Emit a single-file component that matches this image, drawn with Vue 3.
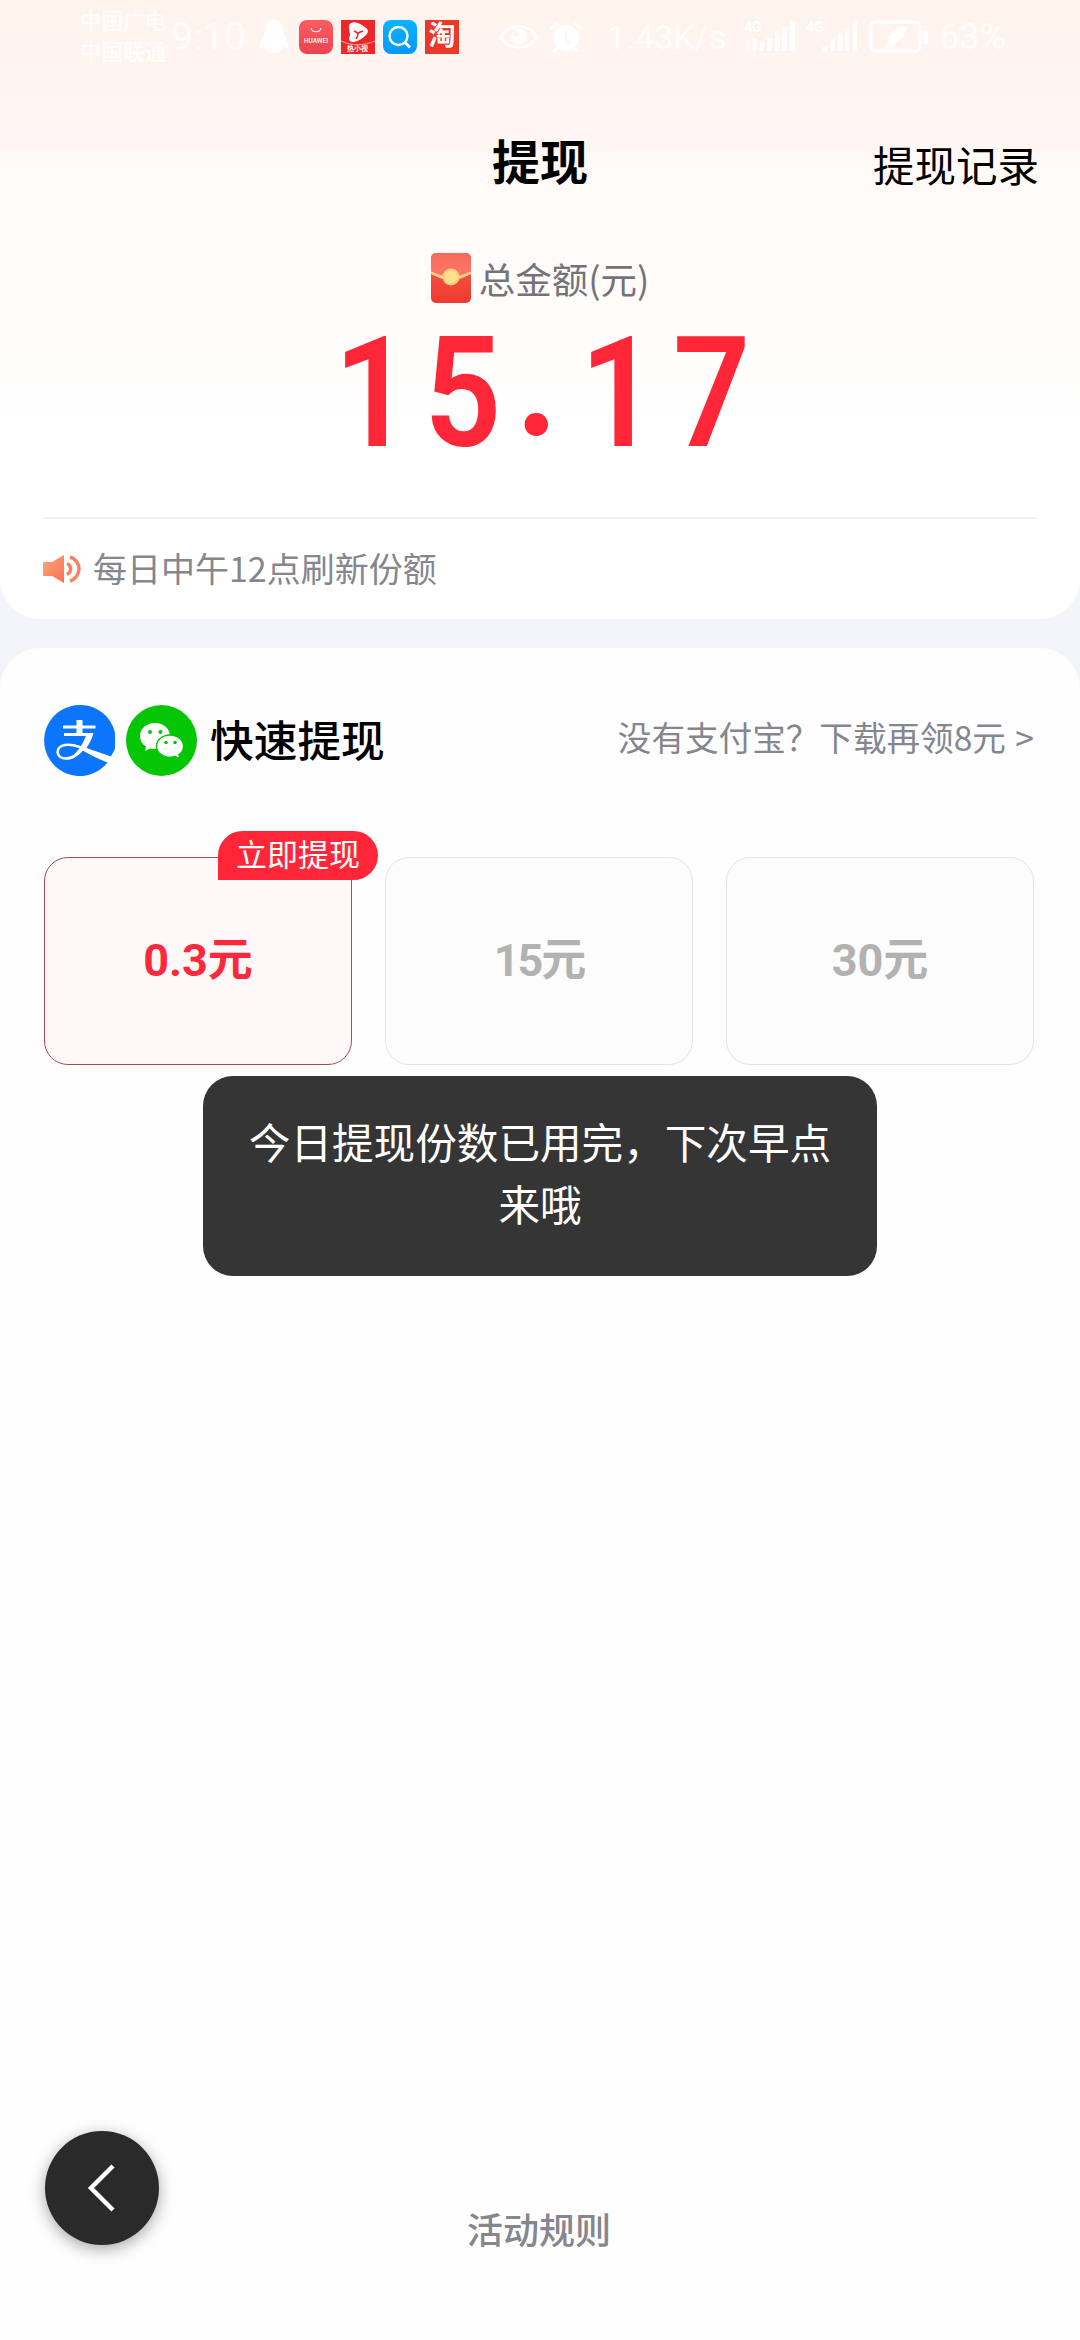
<script setup>
const amount = [
  { ch: '1', w: 90 },
  { ch: '5', w: 94 },
  { ch: '.', w: 62, dot: true },
  { ch: '1', w: 93 },
  { ch: '7', w: 80 },
]
const options = [
  { value: '0.3', active: true },
  { value: '15', tight: true },
  { value: '30' },
]
</script>

<template>
  <div class="page">
    <section class="summary">
      <div class="status">
        <div class="carriers"><span>中国广电</span><span>中国联通</span></div>
        <span class="clock">9:10</span>
        <svg class="bell" width="28" height="34" viewBox="0 0 28 34">
          <path fill="#fff" d="M14 0c-6 0-9 4-9 10 0 4-5 10-5 16 0 3 2 3 4 0 1 3 2 4 4 5-4 3 12 3 12 0 2-1 3-2 4-5 2 3 4 3 4 0 0-6-5-12-5-16 0-6-3-10-9-10z" />
        </svg>
        <div class="apps">
          <div class="app huawei">
            <svg width="12" height="6" viewBox="0 0 12 6"><path d="M1 1c1 5 9 5 10 0" fill="none" stroke="#fff" stroke-width="1.2" /></svg>
            <span>HUAWEI</span>
          </div>
          <div class="app video">
            <svg width="34" height="34" viewBox="0 0 34 34">
              <path d="M10 3c4-2 9 0 15 5 3 2 2 5 0 7-4 4-9 7-13 7-5 0-4-4-3-7 0-4-3-10 1-12z" fill="#fff" />
              <path d="M13 11c2 1 3 1 4 3 0 2-1 3-2 5M17 13l5-2" fill="none" stroke="#ee2529" stroke-width="1.6" />
              <path d="M0 21c11 5 22 5 34 0" fill="none" stroke="#f6b08c" stroke-width="1" />
            </svg>
            <span>热小视</span>
          </div>
          <div class="app search">
            <svg width="34" height="34" viewBox="0 0 34 34"><circle cx="15.500" cy="16" r="9" fill="none" stroke="#fff" stroke-width="2.400" /><path d="M21.500 22l5.500 5.500" stroke="#fff" stroke-width="3" /></svg>
          </div>
          <div class="app tao">淘</div>
        </div>
        <svg class="eye" width="40" height="26" viewBox="0 0 40 26">
          <path d="M2 13C9-1 31-1 38 13 31 27 9 27 2 13z" fill="none" stroke="#fff" stroke-width="3" />
          <circle cx="20" cy="13" r="8" fill="#fff" /><circle cx="17" cy="10" r="3" fill="#fff4f0" />
        </svg>
        <svg class="alarm" width="32" height="32" viewBox="0 0 32 32">
          <circle cx="16" cy="17" r="13" fill="#fff" />
          <path d="M1 8l7-6M31 8l-7-6M7 27l-3 4M25 27l3 4" stroke="#fff" stroke-width="3" />
          <path d="M16 9v9l5 5" fill="none" stroke="#fff4f0" stroke-width="2" />
        </svg>
        <span class="speed">1.43K/s</span>
        <svg class="signals" width="116" height="34" viewBox="0 0 116 34" fill="#fff">
          <text x="0" y="12" font-size="14" font-weight="700">4G</text>
          <path d="M2 20h4v11H2zM9 18h4v13H9zM16 22h4v9h-4zM23 18h5v13h-5zM31 13h5v18h-5zM38 7h5v24h-5zM46 1h5v30h-5z" />
          <text x="62" y="12" font-size="14" font-weight="700">4G</text>
          <path d="M79 26h4v5h-4zM87 20h4v11h-4zM94 14h4v17h-4zM101 8h4v23h-4zM109 1h4v30h-4z" />
        </svg>
        <svg class="battery" width="62" height="34" viewBox="0 0 62 34">
          <rect x="2" y="2" width="49" height="29" rx="4" fill="none" stroke="#fff" stroke-width="3" />
          <path d="M55 10h4v14h-4z" fill="#fff" /><path d="M17 19L30 7h8l-4 8h3L22 27h-5l4-8z" fill="#fff" />
        </svg>
        <span class="percent">63%</span>
      </div>

      <header class="nav">
        <span></span>
        <h1>提现</h1>
        <span class="history">提现记录</span>
      </header>

      <div class="label">
        <svg width="40" height="50" viewBox="0 0 40 50">
          <defs>
            <linearGradient id="packet" x1="0" y1="0" x2="0" y2="1"><stop offset="0" stop-color="#f85e50" /><stop offset="1" stop-color="#ee3a2c" /></linearGradient>
            <linearGradient id="flap" x1="0" y1="0" x2="0" y2="1"><stop offset="0" stop-color="#fb6a5d" /><stop offset="1" stop-color="#fa7869" /></linearGradient>
          </defs>
          <rect width="40" height="50" rx="5" fill="url(#packet)" />
          <path d="M0 19V5a5 5 0 0 1 5-5h30a5 5 0 0 1 5 5v14q-20 11-40 0z" fill="url(#flap)" />
          <path d="M0 19q20 10 40 0v1.500q-20 12-40 0z" fill="#ffd28b" stroke="#ffd28b" />
          <circle cx="20" cy="24" r="8.500" fill="#fcd477" /><circle cx="20" cy="24" r="6" fill="#ffe092" />
        </svg>
        <span>总金额(元)</span>
      </div>
      <div class="amount">
        <span v-for="(d, i) in amount" :key="i" :class="{ dot: d.dot }" :style="{ width: d.w + 'px' }">{{ d.ch }}</span>
      </div>

      <div class="notice">
        <svg width="40" height="30" viewBox="0 0 40 30">
          <defs><linearGradient id="horn" x1="0" y1="0" x2="1" y2="1"><stop offset="0" stop-color="#ffa873" /><stop offset="1" stop-color="#f5705a" /></linearGradient></defs>
          <path d="M2 8h8L22 1v28L10 22H2a1 1 0 0 1-1-1V9a1 1 0 0 1 1-1z" fill="url(#horn)" />
          <path d="M25 9.500a6 6 0 0 1 0 11M28 3a12.500 12.500 0 0 1 0 24" fill="none" stroke="#f87f60" stroke-width="3.400" />
        </svg>
        <span>每日中午12点刷新份额</span>
      </div>
    </section>

    <section class="withdraw">
      <div class="heading">
        <svg width="71" height="71" viewBox="0 0 71 71">
          <path d="M35.500 0a35.500 35.500 0 1 0 28 57.500L70.500 45A35.500 35.500 0 0 0 35.500 0z" fill="#0b75fe" />
          <path d="M19 20.500h32.500v3H19zM32.500 15h6v16h-6zM20 28h26v3H20z" fill="#fff" />
          <path d="M46 29C43 41 33 53.500 22 53.500c-11 0-11-12-1-13.500 10-1.500 20 4 30 9" fill="none" stroke="#fff" stroke-width="2.600" />
          <path d="M43 28h6.500c-2 7-4 10.500-7 15l26 9-4 6c-10-4-18-8-26-12.500-5 5-9 8-15 9 8-5 15-13 19.500-26.500z" fill="#fff" />
        </svg>
        <svg width="71" height="71" viewBox="0 0 71 71">
          <circle cx="35.500" cy="35.500" r="35.500" fill="#05c605" />
          <path d="M29 18c8.500 0 15 5.800 15 13s-6.500 13-15 13c-2 0-3.500-.2-5-.6L19 46l1-4.500c-4-2.500-6-6-6-10.500 0-7.200 6.500-13 15-13z" fill="#fff" />
          <path d="M44 30c7.500 0 13.500 5 13.500 11.200 0 3.500-2 6.500-4.700 8.400l.8 4-4.600-2.200c-1.500.5-3.200.8-5 .8-7.500 0-13.500-5-13.500-11S36.500 30 44 30z" fill="#fff" stroke="#05c605" stroke-width="1.300" />
          <g fill="#05c605"><circle cx="24" cy="27" r="2" /><circle cx="34.500" cy="27" r="2" /><circle cx="40" cy="37.500" r="1.800" /><circle cx="49" cy="37.500" r="1.800" /></g>
        </svg>
        <h2>快速提现</h2>
        <span class="link">没有支付宝？下载再领8元 &gt;</span>
      </div>
      <div class="options">
        <div v-for="o in options" :key="o.value" class="option" :class="{ active: o.active, tight: o.tight }">
          {{ o.value }}元
          <span v-if="o.active" class="badge">立即提现</span>
        </div>
      </div>
      <footer>活动规则</footer>
    </section>

    <div class="toast">今日提现份数已用完，下次早点来哦</div>
    <button class="back" aria-label="返回">
      <svg width="34" height="54" viewBox="0 0 34 54"><path d="M28 5L6 27l22 22" fill="none" stroke="#fff" stroke-width="4.500" /></svg>
    </button>
  </div>
</template>

<style>
body { margin: 0; }
</style>

<style scoped>
.page {
  position: relative;
  display: flex;
  flex-direction: column;
  gap: 29px;
  height: 2340px;
  background: #f4f5fa;
  font-family: "Noto Sans CJK SC", sans-serif;
  overflow: hidden;
}
h1, h2 { margin: 0; }
svg { display: block; flex: none; }
.summary {
  box-sizing: border-box;
  height: 619px;
  border-radius: 0 0 40px 40px;
  background: linear-gradient(#fff3ee 0, #fff5f1 105px, #fff6f4 152px, #fffaf7 153px, #fffcf9 290px, #fffefd 375px, #fff 450px);
}
.status {
  display: flex;
  align-items: center;
  height: 74px;
  padding-left: 80px;
  color: #fffdfb;
  font-family: Roboto, "Noto Sans CJK SC", sans-serif;
  white-space: nowrap;
}
.carriers { display: flex; flex-direction: column; width: 91px; font-size: 21.5px; font-weight: 500; line-height: 31px; }
.clock { width: 89px; font-size: 39px; }
.bell { margin-right: 11px; }
.apps { display: flex; gap: 8px; }
.app { position: relative; width: 34px; height: 34px; overflow: hidden; }
.huawei {
  display: flex;
  flex-direction: column;
  align-items: center;
  gap: 4px;
  padding-top: 7px;
  box-sizing: border-box;
  border-radius: 8px;
  background: linear-gradient(#fc5c5f, #ec4350);
  font: 500 6.5px/9px Roboto, sans-serif;
}
.video { background: #ee2529; }
.video span { position: absolute; left: 6px; bottom: 1px; font-size: 7px; line-height: 8px; font-weight: 700; }
.search { border-radius: 8px; background: linear-gradient(#07b4ff, #0797fb); }
.tao { background: #ec3829; font-size: 27px; line-height: 32px; font-weight: 700; text-align: center; }
.eye { margin-left: 40px; }
.alarm { margin-left: 11px; }
.speed { width: 137px; margin-left: 25px; font-size: 34px; }
.signals { margin-right: 9px; }
.battery { margin-right: 8px; }
.percent { font-size: 36px; }
.nav {
  display: grid;
  grid-template-columns: 1fr auto 1fr;
  align-items: center;
  height: 100px;
  padding: 36px 41px 0;
  margin-top: -1px;
  line-height: 60px;
}
h1 { font-size: 48px; font-weight: 700; }
.history { padding-top: 10px; font-size: 41.5px; text-align: right; }
.label {
  display: flex;
  align-items: center;
  justify-content: center;
  gap: 8px;
  height: 50px;
  margin-top: 44px;
  color: #72737b;
  font-size: 36.5px;
}
.amount {
  display: flex;
  height: 112px;
  margin: 35px 0 0 334px;
  color: #ff2638;
  font: 600 154px/112px Roboto, sans-serif;
}
.amount span { transform: scaleX(.88); transform-origin: left; }
.amount .dot { font-family: Lato, sans-serif; font-weight: 700; transform: translateY(-18px); }
.notice {
  display: flex;
  align-items: center;
  gap: 11px;
  height: 100px;
  margin: 67px 42px 0;
  border-top: 2px solid #f2f2f4;
  color: #85868e;
  font-size: 34px;
}
.notice span { padding-bottom: 4px; }
.withdraw {
  display: flex;
  flex: 1;
  flex-direction: column;
  box-sizing: border-box;
  padding: 57px 46px 72px 44px;
  border-radius: 40px 40px 0 0;
  background: #fefefe;
}
.heading { display: flex; align-items: center; height: 71px; gap: 11px; }
h2 { margin-left: 2px; padding-bottom: 5px; font-size: 43.7px; font-weight: 500; line-height: 60px; }
.link { margin-left: auto; padding-bottom: 8px; color: #85868e; font-size: 33.6px; word-spacing: 2px; }
.options { display: flex; gap: 33px; margin-top: 81px; }
.option {
  position: relative;
  display: flex;
  flex: 1;
  align-items: center;
  justify-content: center;
  box-sizing: border-box;
  height: 208px;
  border: 1px solid #e5e5e5;
  border-radius: 24px;
  background: #fcfcfc;
  color: #b2b2b2;
  font: 700 45px/60px Roboto, "Noto Sans CJK SC", sans-serif;
}
.active { border-color: #b44558; background: #fef8f8; color: #fa293b; }
.tight { letter-spacing: -2px; }
.badge {
  position: absolute;
  top: -27px;
  right: -27px;
  width: 160px;
  height: 49px;
  border-radius: 25px 25px 25px 0;
  background: #ff2638;
  color: #fff;
  font-size: 31px;
  font-weight: 400;
  line-height: 49px;
  text-align: center;
}
footer { margin-top: auto; color: #85868e; font-size: 36px; font-weight: 500; line-height: 80px; text-align: center; }
.toast {
  position: absolute;
  top: 1076px;
  left: 203px;
  box-sizing: border-box;
  width: 674px;
  height: 200px;
  padding: 34px 40px 0;
  border-radius: 30px;
  background: #353535;
  color: #fff;
  font-size: 41.6px;
  line-height: 62px;
  text-align: center;
}
.back {
  position: absolute;
  top: 2131px;
  left: 45px;
  display: flex;
  align-items: center;
  justify-content: center;
  width: 114px;
  height: 114px;
  padding: 0;
  border: 0;
  border-radius: 50%;
  background: #2a2a2a;
  box-shadow: 0 4px 16px rgba(0, 0, 0, .35);
}
</style>
